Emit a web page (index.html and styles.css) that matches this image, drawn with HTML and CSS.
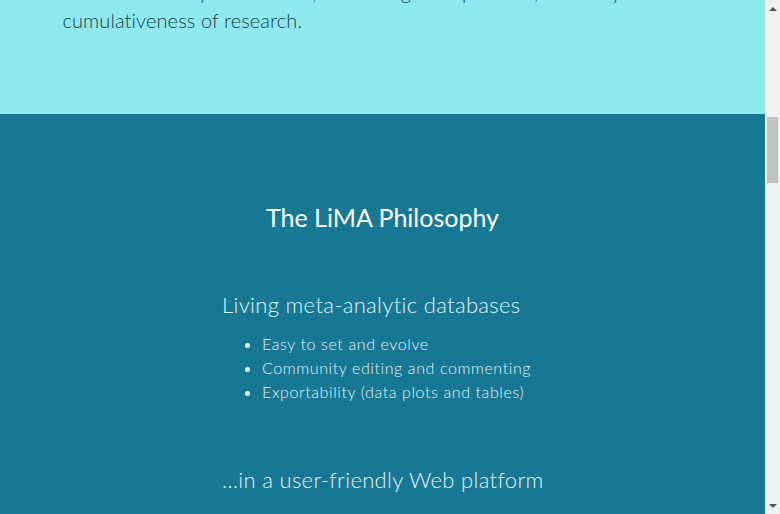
FILE: index.html
```html
<!DOCTYPE html>
<html lang="en">
<head>
<meta charset="utf-8">
<title>LiMA</title>
<link rel="stylesheet" href="styles.css">
</head>
<body>
<div class="viewport">
  <div class="scroller" id="scroller">
    <section class="intro">
      <div class="container">
        <p class="lead">LiMA, the Living Meta-Analysis platform, aims to make the aggregation of research<br>evidence as easy as it can be, enhancing the openness, reliability and<br>cumulativeness of research.</p>
      </div>
    </section>
    <section class="philosophy" id="philosophy">
      <h2 class="section-title">The LiMA Philosophy</h2>
      <div class="points">
        <div class="point">
          <h3 class="point-title">Living meta-analytic databases</h3>
          <ul class="point-list">
            <li>Easy to set and evolve</li>
            <li>Community editing and commenting</li>
            <li>Exportability (data plots and tables)</li>
          </ul>
        </div>
        <div class="point">
          <h3 class="point-title">…in a user-friendly Web platform</h3>
          <ul class="point-list">
            <li>Intuitive and accessible interface</li>
            <li>Open to everyone</li>
          </ul>
        </div>
      </div>
    </section>
  </div>
  <div class="scrollbar" aria-hidden="true">
    <div class="sb-btn"><span class="sb-arrow up"></span></div>
    <div class="sb-track"><div class="sb-thumb"></div></div>
    <div class="sb-btn"><span class="sb-arrow down"></span></div>
  </div>
</div>
<script src="script.js"></script>
</body>
</html>
```
FILE: styles.css
```css
html, body {
  margin: 0;
  padding: 0;
  height: 100%;
  overflow: hidden;
}
body {
  font-family: "Lato", "Liberation Sans", sans-serif;
  font-weight: 300;
}
.viewport {
  display: flex;
  height: 100vh;
}
.scroller {
  flex: 1;
  overflow: hidden;
}
.intro {
  background: #8ee9ee;
  padding: 400px 0 80px;
}
.container {
  width: 640px;
  margin: 0 auto;
}
.lead {
  margin: 0;
  font-size: 20px;
  letter-spacing: 0.1px;
  line-height: 28px;
  color: #1e3c43;
  white-space: nowrap;
}
.philosophy {
  background: #177893;
  padding: 89px 0 600px;
  color: #ffffff;
}
.section-title {
  margin: 0 0 60px;
  font-size: 25px;
  font-weight: 400;
  line-height: 28px;
  text-align: center;
}
.points {
  width: 321px;
  margin: 0 auto;
}
.point {
  margin-bottom: 62px;
}
.point-title {
  margin: 0 0 13px;
  font-size: 22px;
  letter-spacing: 0.33px;
  font-weight: 300;
  line-height: 28px;
  color: #e2f2f5;
  white-space: nowrap;
}
.point-list {
  margin: 0;
  padding-left: 40px;
  font-size: 16px;
  letter-spacing: 0.6px;
  line-height: 24px;
  color: #e4f1f4;
  white-space: nowrap;
}
.scrollbar {
  width: 15px;
  flex: none;
  background: #f1f1f1;
  display: flex;
  flex-direction: column;
}
.sb-btn {
  height: 17px;
  flex: none;
  display: flex;
  align-items: center;
  justify-content: center;
}
.sb-arrow {
  width: 0;
  height: 0;
  border-left: 4px solid transparent;
  border-right: 4px solid transparent;
}
.sb-arrow.up {
  border-bottom: 4px solid #505050;
}
.sb-arrow.down {
  border-top: 4px solid #505050;
}
.sb-track {
  flex: 1;
  padding: 0 2px;
}
.sb-thumb {
  margin-top: 100px;
  height: 66px;
  background: #c1c1c1;
}
```
FILE: script.js
```js
var sc = document.getElementById('scroller');
var s = document.getElementById('philosophy');
sc.scrollTop = s.offsetTop - sc.offsetTop - 114;
```
